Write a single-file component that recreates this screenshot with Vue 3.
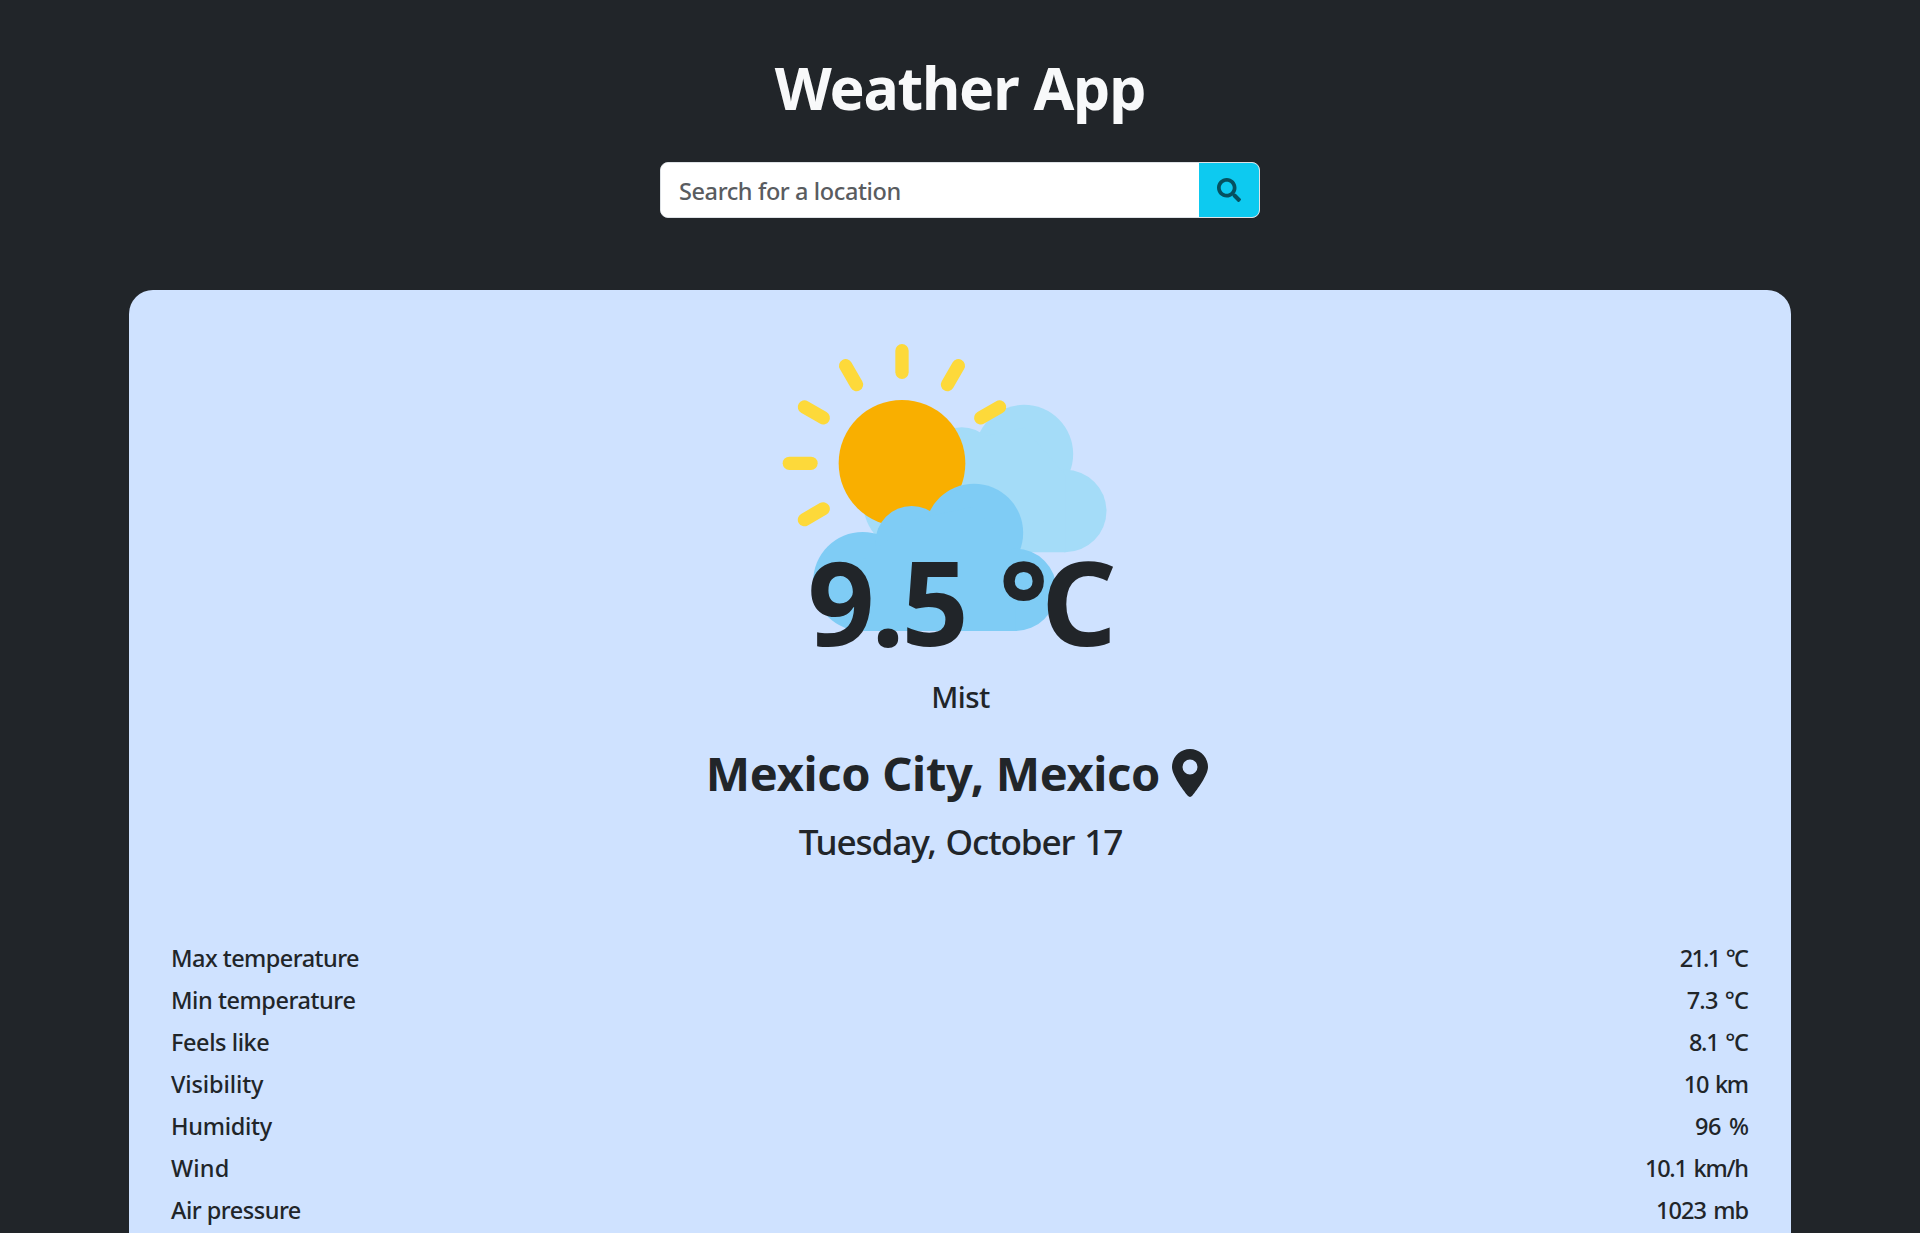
<script setup>
const details = [
  { label: 'Max temperature', labelSpacing: -0.55, value: '21.1 °C', valueSpacing: -1.75 },
  { label: 'Min temperature', labelSpacing: -0.45, value: '7.3 °C', valueSpacing: -0.8 },
  { label: 'Feels like', labelSpacing: -0.42, value: '8.1 °C', valueSpacing: -1.25 },
  { label: 'Visibility', labelSpacing: -0.12, value: '10 km', valueSpacing: -1.3 },
  { label: 'Humidity', labelSpacing: -0.3, value: '96 %', valueSpacing: -0.3 },
  { label: 'Wind', labelSpacing: 0.2, value: '10.1 km/h', valueSpacing: -1.25 },
  { label: 'Air pressure', labelSpacing: -0.5, value: '1023 mb', valueSpacing: -0.95 },
]
const rayAngles = [-120, -90, -60, -30, 0, 30, 60]
</script>

<template>
  <div class="app">
    <h1 class="title">Weather App</h1>
    <form class="search" @submit.prevent>
      <input class="search-input" type="text" placeholder="Search for a location" />
      <button class="search-button" type="submit" aria-label="Search">
        <svg class="search-icon" viewBox="0 0 512 512">
          <path d="M505 442.7L405.3 343c-4.500-4.500-10.600-7-17-7H372c27.600-35.300 44-79.700 44-128C416 93.100 322.900 0 208 0S0 93.100 0 208s93.100 208 208 208c48.300 0 92.700-16.400 128-44v16.300c0 6.400 2.500 12.500 7 17l99.700 99.700c9.400 9.400 24.600 9.400 33.900 0l28.300-28.300c9.400-9.400 9.400-24.600.1-34zM208 336c-70.700 0-128-57.200-128-128 0-70.700 57.200-128 128-128 70.700 0 128 57.200 128 128 0 70.700-57.200 128-128 128z" />
        </svg>
      </button>
    </form>

    <main class="card">
      <svg class="weather-icon" viewBox="0 0 1140 1020">
        <defs>
          <g id="cloud">
            <circle cx="308" cy="784.500" r="148.500" />
            <circle cx="455" cy="667" r="109" />
            <circle cx="642" cy="638.500" r="147.500" />
            <circle cx="766" cy="809.500" r="123.500" />
            <path d="M308 933V720L455 600L642 560L766 700V933Z" />
          </g>
        </defs>
        <use href="#cloud" class="cloud-back" x="150" y="-236.500" />
        <circle class="sun" cx="426" cy="430" r="190" />
        <line
          v-for="angle in rayAngles"
          :key="angle"
          class="ray"
          x1="426"
          x2="426"
          y1="92"
          y2="157"
          :transform="`rotate(${angle} 426 430)`"
        />
        <use href="#cloud" class="cloud-front" />
      </svg>
      <div class="temperature">9.5 <span class="degree">°</span>C</div>
      <div class="condition">Mist</div>
      <div class="location">
        <span class="place">Mexico City, Mexico</span>
        <svg class="pin" viewBox="0 0 384 512">
          <path d="M215.700 499.200C267 435 384 279.400 384 192C384 86 298 0 192 0S0 86 0 192c0 87.400 117 243 168.300 307.200c12.300 15.300 35.100 15.300 47.400 0zM192 112a80 80 0 1 1 0 160 80 80 0 1 1 0-160z" />
        </svg>
      </div>
      <div class="date">Tuesday, October 17</div>
      <div class="details">
        <div v-for="row in details" :key="row.label" class="row">
          <span :style="{ letterSpacing: row.labelSpacing + 'px' }">{{ row.label }}</span>
          <span class="value" :style="{ letterSpacing: row.valueSpacing + 'px', marginRight: -row.valueSpacing + 'px' }">{{ row.value }}</span>
        </div>
      </div>
    </main>
  </div>
</template>

<style>
body {
  background: #212529;
  overflow: hidden;
}
</style>

<style scoped>
.app {
  display: flex;
  flex-direction: column;
  align-items: center;
  height: 1233px;
  overflow: hidden;
  box-sizing: border-box;
  padding-top: 51px;
  background: #212529;
  color: #212529;
  font-family: "Noto Sans", "Open Sans", sans-serif;
  font-weight: 500;
}
.title {
  margin: 0 0 39px;
  flex: none;
  color: #f8f9fa;
  font-size: 59px;
  font-weight: 700;
  line-height: 72px;
  letter-spacing: -1.2px;
  word-spacing: 1px;
}
.search {
  display: flex;
  flex: none;
  box-sizing: border-box;
  width: 600px;
  height: 56px;
  margin-bottom: 72px;
  border: 1px solid #dee2e6;
  border-radius: 8px;
  background: #fff;
  overflow: hidden;
}
.search-input {
  flex: 1;
  min-width: 0;
  padding: 2px 18px 0;
  border: 0;
  outline: 0;
  background: #fff;
  color: #212529;
  font-family: inherit;
  font-size: 23.5px;
  font-weight: 500;
  letter-spacing: -0.4px;
}
.search-input::placeholder {
  color: #595c5f;
  opacity: 1;
}
.search-button {
  display: flex;
  align-items: center;
  justify-content: center;
  width: 60px;
  padding: 0;
  border: 0;
  background: #0dcaf0;
}
.search-icon {
  width: 24px;
  height: 24px;
  fill: #055160;
}
.card {
  display: flex;
  flex: none;
  flex-direction: column;
  align-items: center;
  box-sizing: border-box;
  width: 1662px;
  height: 1000px;
  padding: 30px 41px 0 42px;
  border-radius: 24px;
  background: #cfe2ff;
}
.weather-icon {
  flex: none;
  width: 380px;
  height: 340px;
  margin-right: 21px;
}
.cloud-back {
  fill: #a4dcf8;
}
.cloud-front {
  fill: #7fccf5;
}
.sun {
  fill: #f9af00;
}
.ray {
  stroke: #fdd93a;
  stroke-width: 40px;
  stroke-linecap: round;
}
.temperature {
  position: relative;
  margin-top: -132px;
  font-size: 117.5px;
  font-weight: 700;
  line-height: 144px;
  letter-spacing: -3.2px;
  word-spacing: 6px;
}
.degree {
  letter-spacing: -7.5px;
}
.condition {
  margin-top: 3px;
  font-size: 29.5px;
  line-height: 44px;
  letter-spacing: -0.5px;
}
.location {
  display: flex;
  align-items: center;
  gap: 12px;
  margin-top: 25px;
  padding-right: 7px;
}
.place {
  padding-top: 1px;
  font-size: 47px;
  font-weight: 700;
  line-height: 56px;
  letter-spacing: -0.3px;
}
.pin {
  width: 36px;
  height: 48px;
  fill: #212529;
}
.date {
  margin-top: 19px;
  font-size: 35.2px;
  line-height: 42px;
  letter-spacing: -1.15px;
  word-spacing: 2px;
}
.details {
  align-self: stretch;
  margin-top: 75px;
}
.row {
  display: flex;
  justify-content: space-between;
  font-size: 23.5px;
  line-height: 42px;
}
.value {
  padding-right: 1px;
  word-spacing: 2px;
}
</style>
